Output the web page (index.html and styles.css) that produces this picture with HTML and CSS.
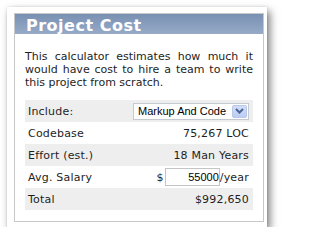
FILE: index.html
```html
<!DOCTYPE html>
<html lang="en">
<head>
<meta charset="utf-8">
<title>Project Cost</title>
<link rel="stylesheet" href="styles.css">
</head>
<body>
<div class="card">
  <div class="panel">
    <h2 class="panel-title">Project Cost</h2>
    <p class="intro">This calculator estimates how much it would have cost to hire a team to write this project from scratch.</p>
    <table class="cost">
      <tr class="alt">
        <td class="label">Include:</td>
        <td class="value">
          <div class="select">
            <span class="select-text">Markup And Code</span>
            <span class="select-btn">
              <svg width="9" height="6" viewBox="0 0 9 6"><path d="M1 1 L4.5 4.5 L8 1" fill="none" stroke="#4a6596" stroke-width="2"/></svg>
            </span>
          </div>
        </td>
      </tr>
      <tr>
        <td class="label">Codebase</td>
        <td class="value">75,267 LOC</td>
      </tr>
      <tr class="alt">
        <td class="label">Effort (est.)</td>
        <td class="value">18 Man Years</td>
      </tr>
      <tr>
        <td class="label">Avg. Salary</td>
        <td class="value">
          <span class="salary">$<input class="salary-input" type="text" value="55000">/year</span>
        </td>
      </tr>
      <tr class="alt">
        <td class="label">Total</td>
        <td class="value">$992,650</td>
      </tr>
    </table>
  </div>
</div>
</body>
</html>
```

FILE: styles.css
```css
html, body {
  margin: 0;
  padding: 0;
  background: #ffffff;
}

body {
  font-family: "DejaVu Sans", Verdana, sans-serif;
  font-size: 11px;
  color: #1e1e1e;
}

.card {
  margin: 7px 0 0 7px;
  width: 260px;
  box-sizing: border-box;
  padding: 6px 4px 5px 7px;
  background: #ffffff;
  box-shadow: 3px 4px 8px rgba(0, 0, 0, 0.5), 0 0 2px rgba(0, 0, 0, 0.12);
}

.panel {
  width: 250px;
  box-sizing: border-box;
  border: 1px solid #c8c8c8;
  background: #ffffff;
}

.panel-title {
  margin: 0;
  height: 20px;
  box-sizing: border-box;
  padding: 3px 0 0 11px;
  line-height: 17px;
  font-size: 16px;
  font-weight: bold;
  letter-spacing: 0.5px;
  color: #ffffff;
  background: linear-gradient(#7890b2, #97abc7);
}

.intro {
  margin: 16px 10px 0 10px;
  line-height: 13px;
  text-align: justify;
}

.cost {
  margin: 11px 10px 11px 10px;
  width: 228px;
  border-collapse: collapse;
  border-spacing: 0;
}

.cost td {
  height: 22px;
  padding: 0;
  vertical-align: middle;
  white-space: nowrap;
  letter-spacing: 0.2px;
}

.cost tr.alt td {
  background: #eeeeee;
}

.cost .label {
  padding-left: 3px;
}

.cost .value {
  text-align: right;
  padding-right: 4px;
}

.select {
  display: inline-flex;
  align-items: center;
  justify-content: space-between;
  width: 116px;
  height: 17px;
  box-sizing: border-box;
  border: 1px solid #c5c9d0;
  background: #ffffff;
  padding: 0 1px 0 4px;
  vertical-align: middle;
  text-align: left;
  letter-spacing: 0;
}

.select-text {
  font-family: "Liberation Sans", Arial, sans-serif;
  font-size: 11px;
  color: #000000;
  letter-spacing: 0;
}

.select-btn {
  display: flex;
  align-items: center;
  justify-content: center;
  width: 15px;
  height: 13px;
  box-sizing: border-box;
  border: 1px solid #b7c8ec;
  border-radius: 2px;
  background: linear-gradient(#d3def8, #bccdf3);
}

.salary {
  display: inline-flex;
  align-items: center;
  vertical-align: middle;
}

.salary-input {
  width: 55px;
  height: 18px;
  box-sizing: border-box;
  margin: 0 0 0 1px;
  padding: 0;
  border: 1px solid #c4c4c4;
  font-family: "Liberation Sans", Arial, sans-serif;
  font-size: 11px;
  letter-spacing: 0;
  color: #000000;
  text-align: right;
  background: #ffffff;
  outline: none;
}
```
